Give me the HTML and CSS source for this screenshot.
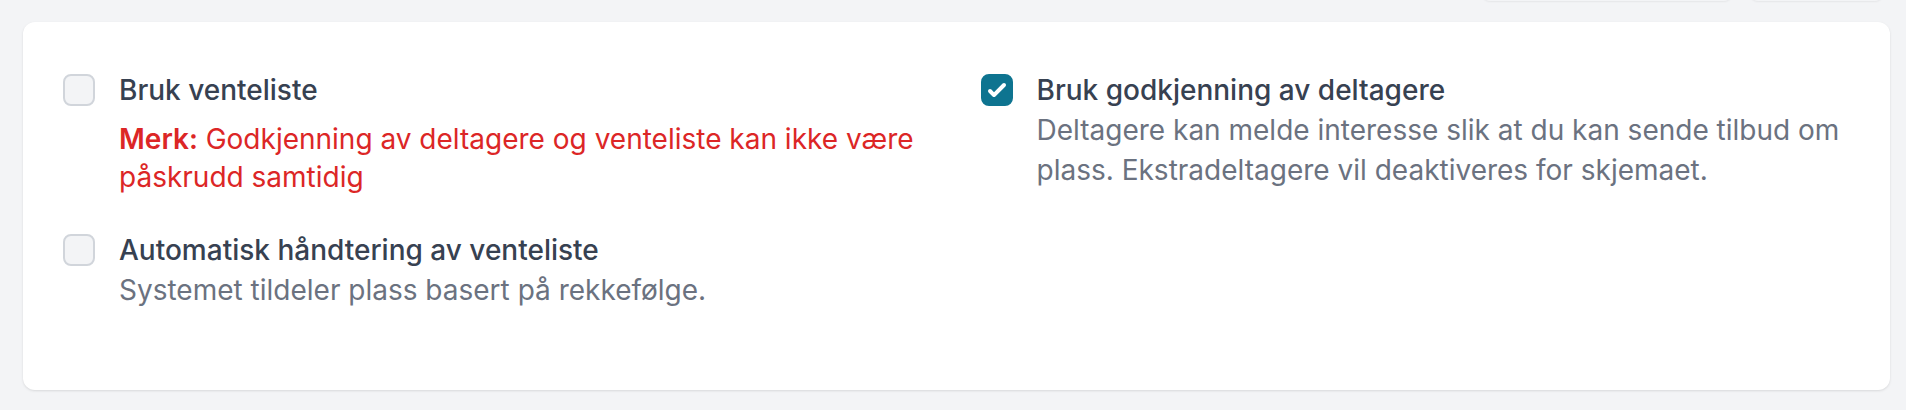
FILE: index.html
```html
<!DOCTYPE html>
<html lang="no">
<head>
<meta charset="utf-8">
<title>Innstillinger</title>
<link rel="stylesheet" href="styles.css">
</head>
<body>
<div class="topbar">
  <span class="ghost-btn wide"></span>
  <span class="ghost-btn narrow"></span>
</div>
<section class="card">
  <div class="grid">
    <div class="col">
      <div class="option">
        <span class="box"></span>
        <div class="text">
          <div class="label">Bruk venteliste</div>
          <div class="warning"><strong>Merk:</strong> Godkjenning av deltagere og venteliste kan ikke være påskrudd samtidig</div>
        </div>
      </div>
      <div class="option">
        <span class="box"></span>
        <div class="text">
          <div class="label">Automatisk håndtering av venteliste</div>
          <div class="desc">Systemet tildeler plass basert på rekkefølge.</div>
        </div>
      </div>
    </div>
    <div class="col">
      <div class="option">
        <span class="box checked">
          <svg viewBox="0 0 16 16" width="32" height="32"><path fill="#fff" d="M12.207 4.793a1 1 0 010 1.414l-5 5a1 1 0 01-1.414 0l-2-2a1 1 0 011.414-1.414L6.5 9.086l4.293-4.293a1 1 0 011.414 0z"/></svg>
        </span>
        <div class="text">
          <div class="label">Bruk godkjenning av deltagere</div>
          <div class="desc">Deltagere kan melde interesse slik at du kan sende tilbud om plass. Ekstradeltagere vil deaktiveres for skjemaet.</div>
        </div>
      </div>
    </div>
  </div>
</section>
</body>
</html>
```

FILE: styles.css
```css
* { box-sizing: border-box; }
html, body { margin: 0; padding: 0; }
body {
  background: #f3f4f6;
  font-family: Inter, "Noto Sans", "Liberation Sans", sans-serif;
  width: 1906px;
  height: 410px;
  overflow: hidden;
}
.topbar {
  display: flex;
  justify-content: flex-end;
  gap: 18px;
  height: 40px;
  margin-top: -39px;
  padding-right: 23px;
}
.ghost-btn {
  display: block;
  height: 40px;
  border-radius: 8px;
  background: #f3f4f6;
  box-shadow: 0 1px 2px rgba(0,0,0,0.06);
}
.ghost-btn.wide { width: 250px; }
.ghost-btn.narrow { width: 133px; }
.card {
  margin: 21px 16px 0 23px;
  height: 368px;
  background: #fff;
  border-radius: 12px;
  box-shadow: 0 1px 3px rgba(0,0,0,0.08), 0 1px 2px rgba(0,0,0,0.04);
  padding: 48px 40px;
}
.grid {
  display: grid;
  grid-template-columns: 1fr 1fr;
  column-gap: 48px;
}
.col {
  display: flex;
  flex-direction: column;
  gap: 34px;
}
.option {
  display: flex;
  align-items: flex-start;
  gap: 24px;
}
.box {
  flex: none;
  width: 32px;
  height: 32px;
  margin-top: 4px;
  border: 2px solid #d1d5db;
  border-radius: 8px;
  background: #f3f4f6;
  display: flex;
  align-items: center;
  justify-content: center;
}
.box.checked {
  background: #0e7490;
  border-color: #0e7490;
}
.box.checked svg { display: block; flex: none; }
.text {
  font-size: 28px;
  line-height: 40px;
}
.label {
  font-weight: 500;
  color: #374151;
}
.warning {
  margin-top: 10px;
  color: #dc2626;
  line-height: 38px;
}
.warning strong { font-weight: 600; }
.desc {
  color: #6b7280;
}
```
